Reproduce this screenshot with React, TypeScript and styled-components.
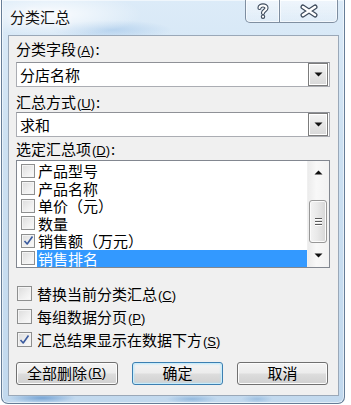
import React from 'react';
import styled, { createGlobalStyle, css } from 'styled-components';

const GlobalStyle = createGlobalStyle`
  html, body {
    margin: 0;
    padding: 0;
    background: #ffffff;
  }
  body {
    font-family: "Noto Sans CJK SC", "Noto Sans", sans-serif;
    font-size: 15px;
    color: #000000;
  }
  * {
    box-sizing: border-box;
  }
`;

const Window = styled.div`
  width: 344px;
  height: 404px;
  margin-left: 1px;
  border: 1px solid #667d97;
  border-top: none;
  border-radius: 0 0 7px 7px;
  padding: 0 5px 7px 6px;
  display: flex;
  flex-direction: column;
  background:
    radial-gradient(ellipse 34px 5px at 40px 398px, rgba(70, 130, 195, 0.6), transparent),
    radial-gradient(ellipse 26px 4px at 190px 399px, rgba(90, 145, 200, 0.45), transparent),
    radial-gradient(ellipse 16px 4px at 255px 399px, rgba(90, 145, 200, 0.35), transparent),
    radial-gradient(ellipse 90px 22px at 50px 14px, rgba(255, 255, 255, 0.85), transparent),
    radial-gradient(ellipse 60px 10px at 110px 30px, rgba(150, 190, 230, 0.5), transparent),
    linear-gradient(180deg, #dcebf8 0%, #cde1f2 35%, #c2d9ee 100%);
  box-shadow: inset 0 0 0 1px rgba(255, 255, 255, 0.55);
`;

const TitleBar = styled.div`
  height: 35px;
  flex: none;
  display: flex;
  justify-content: space-between;
  align-items: flex-start;
`;

const Title = styled.div`
  padding: 8px 0 0 2px;
  font-size: 15px;
  line-height: 18px;
  color: #111;
  text-shadow: 0 0 6px #ffffff, 0 0 10px #ffffff;
`;

const CaptionGroup = styled.div`
  display: flex;
  margin-right: 1px;
`;

const CaptionButton = styled.div<{ $w: number; $side: 'left' | 'right' }>`
  width: ${(p) => p.$w}px;
  height: 23px;
  display: flex;
  align-items: center;
  justify-content: center;
  border: 1px solid rgba(55, 75, 100, 0.6);
  border-top: none;
  background: linear-gradient(180deg, rgba(255, 255, 255, 0.55), rgba(235, 243, 250, 0.35));
  box-shadow: inset 0 0 0 1px rgba(255, 255, 255, 0.6);
  ${(p) =>
    p.$side === 'left'
      ? css`
          border-radius: 0 0 0 5px;
          border-right: none;
        `
      : css`
          border-radius: 0 0 5px 0;
        `}
`;

const Client = styled.div`
  flex: 1;
  border: 1px solid #9aa8b8;
  background: #f0f0f0;
  padding: 2px 8px 0 7px;
  display: flex;
  flex-direction: column;
`;

const FieldLabel = styled.div<{ $top: number }>`
  margin-top: ${(p) => p.$top}px;
  height: 18px;
  line-height: 18px;
  white-space: nowrap;
`;

const KeyText = styled.span`
  font-family: "Liberation Sans", Arial, sans-serif;
  font-size: 13px;
  margin: 0 1px;

  u {
    text-underline-offset: 1px;
  }
`;

const Combo = styled.div<{ $top: number }>`
  margin-top: ${(p) => p.$top}px;
  height: 25px;
  display: flex;
  align-items: center;
  background: #ffffff;
  border: 1px solid #abadb3;
  border-top-color: #8f9197;
  padding: 0 1px 0 3px;
`;

const ComboValue = styled.div`
  flex: 1;
  line-height: 20px;
`;

const DropButton = styled.div`
  width: 20px;
  height: 23px;
  border: 1px solid #7c7c7c;
  background: linear-gradient(180deg, #f4f4f4 0%, #e6e6e6 50%, #d8d8d8 100%);
  box-shadow: inset 0 0 0 1px #ffffff;
  display: flex;
  align-items: center;
  justify-content: center;
`;

const ListBox = styled.div`
  margin-top: 2px;
  height: 108px;
  display: flex;
  background: #ffffff;
  border: 1px solid #828790;
`;

const ListItems = styled.div`
  flex: 1;
  padding-top: 1px;
  display: flex;
  flex-direction: column;
`;

const ListRow = styled.div`
  height: 17.5px;
  display: flex;
  align-items: center;
  padding-left: 4px;
  gap: 2px;
`;

const ItemText = styled.div<{ $selected?: boolean }>`
  flex: 1;
  height: 100%;
  padding-left: 1px;
  line-height: 17px;
  white-space: nowrap;
  ${(p) =>
    p.$selected &&
    css`
      background: #3399ff;
      color: #ffffff;
    `}
`;

const Box = styled.div<{ $size: number }>`
  width: ${(p) => p.$size}px;
  height: ${(p) => p.$size}px;
  flex: none;
  border: 1px solid #8e8f8f;
  background: linear-gradient(135deg, #dcdcdc 0%, #f0f0f0 60%, #fbfbfb 100%);
  box-shadow: inset 0 0 0 1px #f4f4f4;
  display: flex;
  align-items: center;
  justify-content: center;
`;

const ScrollBar = styled.div`
  width: 22px;
  flex: none;
  display: flex;
  flex-direction: column;
  background: linear-gradient(90deg, #ececec 0%, #f8f8f8 40%, #f2f2f2 100%);
  border-left: 1px solid #f0f0f0;
`;

const ArrowCell = styled.div`
  height: 23px;
  display: flex;
  align-items: center;
  justify-content: center;
`;

const Track = styled.div`
  flex: 1;
`;

const Thumb = styled.div`
  margin: 16px 2px 0 1px;
  height: 43px;
  border: 1px solid #979797;
  border-radius: 3px;
  background: linear-gradient(90deg, #f3f3f3 0%, #e9e9e9 45%, #d6d6d6 100%);
  box-shadow: inset 0 0 0 1px #fbfbfb;
  display: flex;
  flex-direction: column;
  align-items: center;
  justify-content: center;
  gap: 2px;
`;

const Grip = styled.div`
  width: 7px;
  height: 1px;
  background: #5a5a5a;
  box-shadow: 0 1px 0 #ffffff;
`;

const OptionRow = styled.div<{ $top: number }>`
  margin-top: ${(p) => p.$top}px;
  height: 23px;
  display: flex;
  align-items: center;
  padding-left: 1px;
  gap: 5px;
  white-space: nowrap;
`;

const ButtonRow = styled.div`
  margin-top: 11px;
  display: flex;
  gap: 14px;
`;

const PushButton = styled.div<{ $w: number; $default?: boolean }>`
  width: ${(p) => p.$w}px;
  height: 23px;
  border: 1px solid #707070;
  border-radius: 3px;
  background: linear-gradient(180deg, #f4f4f4 0%, #ececec 48%, #dddddd 52%, #d0d0d0 100%);
  box-shadow: inset 0 0 0 1px #fcfcfc;
  display: flex;
  align-items: center;
  justify-content: center;
  line-height: 20px;
  white-space: nowrap;
  ${(p) =>
    p.$default &&
    css`
      border-color: #3c7fb1;
      box-shadow: inset 0 0 0 1px #c8ecfb, inset 0 0 2px 1px #aee0f6;
    `}
`;

const Key = ({ k }: { k: string }) => (
  <KeyText>
    (<u>{k}</u>)
  </KeyText>
);

const Check = () => (
  <svg width="11" height="11" viewBox="0 0 11 11">
    <path d="M1.5 6 L4.2 9 L9.5 1.5" fill="none" stroke="#3a5a9e" strokeWidth="1.6" strokeLinejoin="round" />
  </svg>
);

const Triangle = ({ up }: { up?: boolean }) => (
  <svg width="9" height="5" viewBox="0 0 9 5">
    <path d={up ? 'M0.5 4.5 L4.5 0.5 L8.5 4.5 Z' : 'M0.5 0.5 L8.5 0.5 L4.5 4.5 Z'} fill="#111" />
  </svg>
);

const HelpIcon = () => (
  <svg width="14" height="16" viewBox="0 0 14 16">
    <g fill="none" strokeLinecap="round" strokeLinejoin="round">
      <path d="M3.5 5 C3.5 1.5 10.5 1.5 10.5 5 C10.5 7.5 7 7.5 7 10" stroke="#3e4b5c" strokeWidth="4.2" />
      <path d="M7 13.6 L7 13.7" stroke="#3e4b5c" strokeWidth="4.4" />
      <path d="M3.5 5 C3.5 1.5 10.5 1.5 10.5 5 C10.5 7.5 7 7.5 7 10" stroke="#ffffff" strokeWidth="2" />
      <path d="M7 13.6 L7 13.7" stroke="#ffffff" strokeWidth="2.2" />
    </g>
  </svg>
);

const CloseIcon = () => (
  <svg width="18" height="14" viewBox="0 0 18 14">
    <g fill="none" strokeLinecap="round">
      <path d="M3 3 L15 11 M15 3 L3 11" stroke="#3e4b5c" strokeWidth="5" />
      <path d="M3 3 L15 11 M15 3 L3 11" stroke="#ffffff" strokeWidth="2.6" />
    </g>
  </svg>
);

const items = [
  { label: '产品型号' },
  { label: '产品名称' },
  { label: '单价（元）' },
  { label: '数量' },
  { label: '销售额（万元）', checked: true },
  { label: '销售排名', selected: true },
];

const options = [
  { label: '替换当前分类汇总', key: 'C', top: 13.5 },
  { label: '每组数据分页', key: 'P', top: 0 },
  { label: '汇总结果显示在数据下方', key: 'S', top: 0, checked: true },
];

export default function App() {
  return (
    <>
      <GlobalStyle />
      <Window>
        <TitleBar>
          <Title>分类汇总</Title>
          <CaptionGroup>
            <CaptionButton $w={34} $side="left">
              <HelpIcon />
            </CaptionButton>
            <CaptionButton $w={59} $side="right">
              <CloseIcon />
            </CaptionButton>
          </CaptionGroup>
        </TitleBar>
        <Client>
          <FieldLabel $top={2}>
            分类字段<Key k="A" />:
          </FieldLabel>
          <Combo $top={4}>
            <ComboValue>分店名称</ComboValue>
            <DropButton>
              <Triangle />
            </DropButton>
          </Combo>
          <FieldLabel $top={6}>
            汇总方式<Key k="U" />:
          </FieldLabel>
          <Combo $top={1}>
            <ComboValue>求和</ComboValue>
            <DropButton>
              <Triangle />
            </DropButton>
          </Combo>
          <FieldLabel $top={3}>
            选定汇总项<Key k="D" />:
          </FieldLabel>
          <ListBox>
            <ListItems>
              {items.map((it) => (
                <ListRow key={it.label}>
                  <Box $size={14}>{it.checked && <Check />}</Box>
                  <ItemText $selected={it.selected}>{it.label}</ItemText>
                </ListRow>
              ))}
            </ListItems>
            <ScrollBar>
              <ArrowCell>
                <Triangle up />
              </ArrowCell>
              <Track>
                <Thumb>
                  <Grip />
                  <Grip />
                  <Grip />
                </Thumb>
              </Track>
              <ArrowCell>
                <Triangle />
              </ArrowCell>
            </ScrollBar>
          </ListBox>
          {options.map((o) => (
            <OptionRow key={o.key} $top={o.top}>
              <Box $size={15}>{o.checked && <Check />}</Box>
              <span>
                {o.label}
                <Key k={o.key} />
              </span>
            </OptionRow>
          ))}
          <ButtonRow>
            <PushButton $w={102}>
              全部删除<Key k="R" />
            </PushButton>
            <PushButton $w={91} $default>
              确定
            </PushButton>
            <PushButton $w={91}>取消</PushButton>
          </ButtonRow>
        </Client>
      </Window>
    </>
  );
}
